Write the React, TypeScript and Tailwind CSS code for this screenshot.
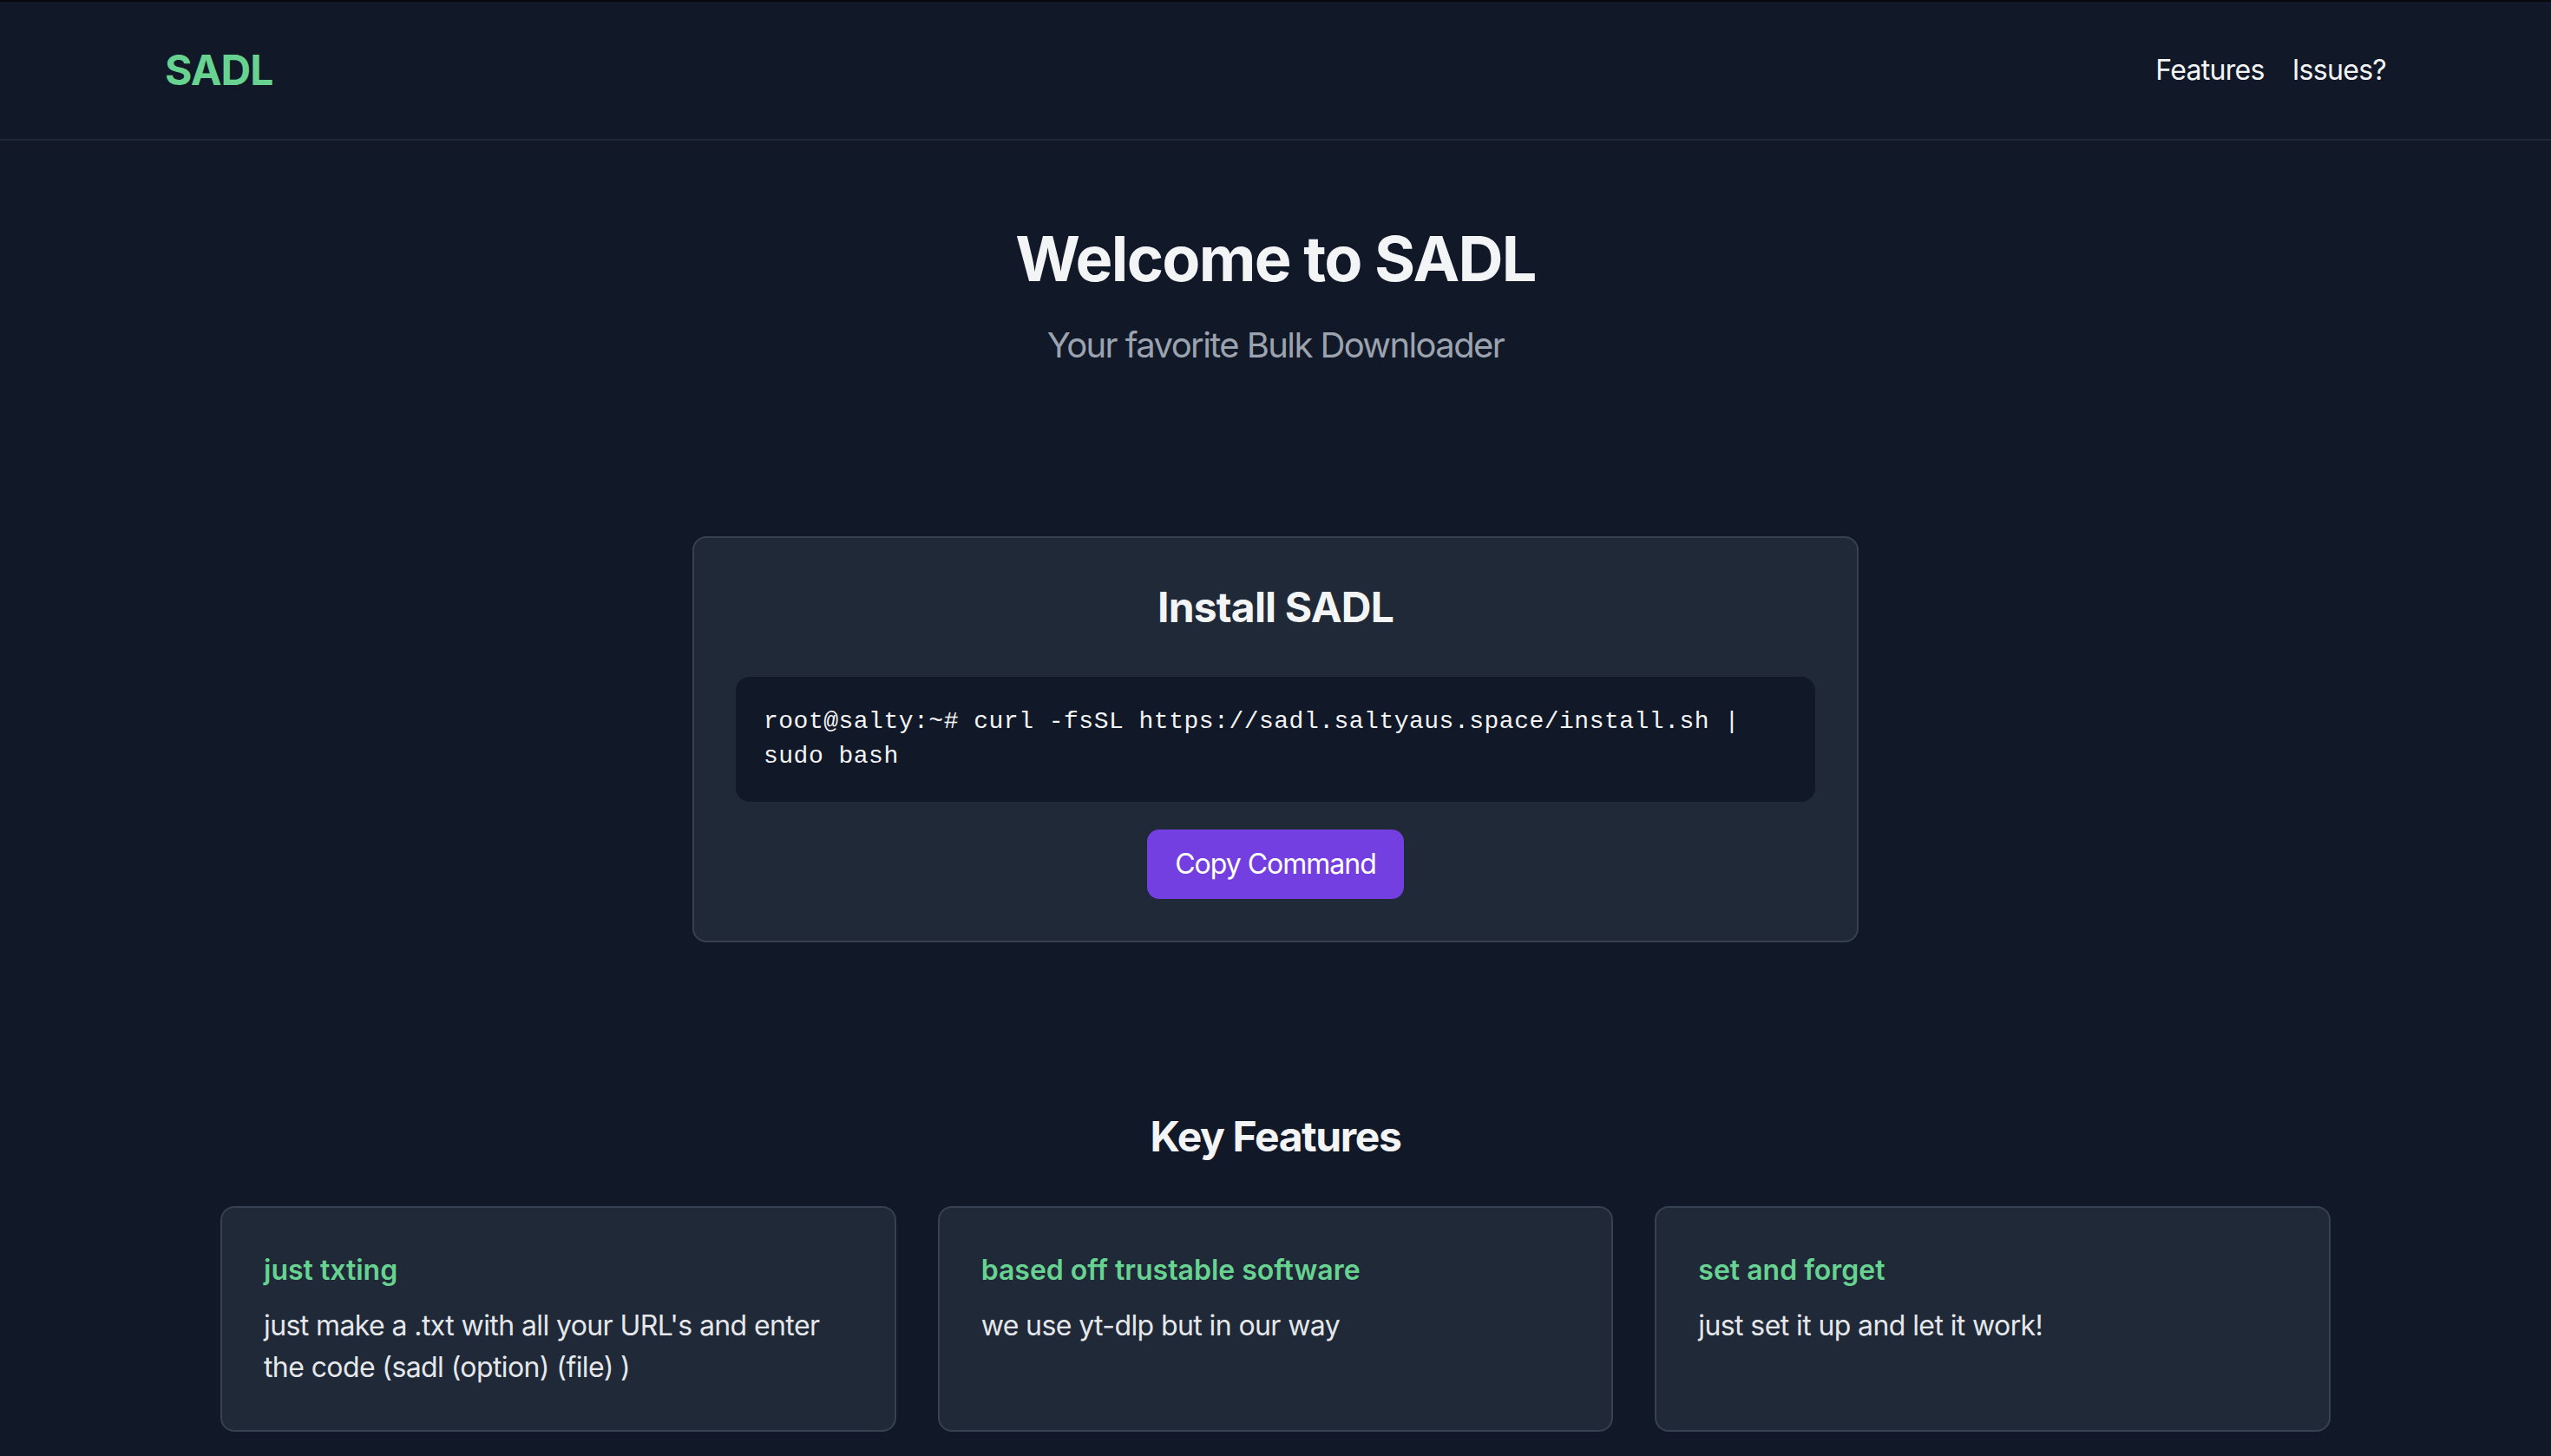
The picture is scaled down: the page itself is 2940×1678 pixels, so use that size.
import React from "react";

const features = [
  {
    title: "just txting",
    body: "just make a .txt with all your URL's and enter the code (sadl (option) (file) )",
  },
  {
    title: "based off trustable software",
    body: "we use yt-dlp but in our way",
  },
  {
    title: "set and forget",
    body: "just set it up and let it work!",
  },
];

export default function App() {
  return (
    <div className="min-h-screen bg-[#111827] text-[#f3f4f6] font-['Inter','Noto_Sans',sans-serif]">
      <div className="h-[2px] bg-[#07090d]" />
      <header className="border-b-2 border-[#1f2937]">
        <div className="mx-auto flex h-[158px] max-w-[2560px] items-center justify-between">
          <a className="text-[48px] leading-[64px] font-bold tracking-[-1px] text-[#68d391]">SADL</a>
          <nav className="flex items-center gap-[32px] text-[32px] leading-[48px] tracking-[-0.7px] text-[#f3f4f6]">
            <a>Features</a>
            <a>Issues?</a>
          </nav>
        </div>
      </header>

      <section className="py-[96px] text-center">
        <h1 className="text-[72px] leading-[80px] font-bold tracking-[-1.7px] text-[#f3f4f6]">
          Welcome to SADL
        </h1>
        <p className="mt-[32px] text-[40px] leading-[56px] tracking-[-1.6px] text-[#9ca3af]">
          Your favorite Bulk Downloader
        </p>
      </section>

      <section className="py-[96px]">
        <div className="mx-auto max-w-[1344px] rounded-[16px] border-2 border-[#374151] bg-[#1f2937] p-[48px] text-center">
          <h2 className="mb-[48px] text-[48px] leading-[64px] font-bold tracking-[-0.8px] text-[#f3f4f6]">Install SADL</h2>
          <pre className="whitespace-pre-wrap break-words rounded-[16px] bg-[#111827] p-[32px] text-left font-['Liberation_Mono','DejaVu_Sans_Mono',monospace] text-[28px] leading-[40px] tracking-[0.5px] text-[#f3f4f6]">
            root@salty:~# curl -fsSL https://sadl.saltyaus.space/install.sh | sudo bash
          </pre>
          <button className="mt-[32px] h-[80px] rounded-[14px] bg-[#743fe0] px-[32px] text-[32px] leading-[48px] tracking-[-1px] text-white">
            Copy Command
          </button>
        </div>
      </section>

      <section className="py-[96px]">
        <div className="mx-auto max-w-[2560px] px-[64px]">
          <h2 className="mb-[48px] text-center text-[48px] leading-[64px] font-bold tracking-[-1.4px] text-[#f3f4f6]">Key Features</h2>
          <div className="grid grid-cols-3 gap-[48px]">
            {features.map((f) => (
              <div key={f.title} className="rounded-[16px] border-2 border-[#374151] bg-[#1f2937] p-[48px]">
                <h3 className="mb-[16px] text-[32px] leading-[48px] font-semibold text-[#68d391]">{f.title}</h3>
                <p className="text-[32px] leading-[48px] tracking-[-0.6px] text-[#e5e7eb]">{f.body}</p>
              </div>
            ))}
          </div>
        </div>
      </section>
    </div>
  );
}
